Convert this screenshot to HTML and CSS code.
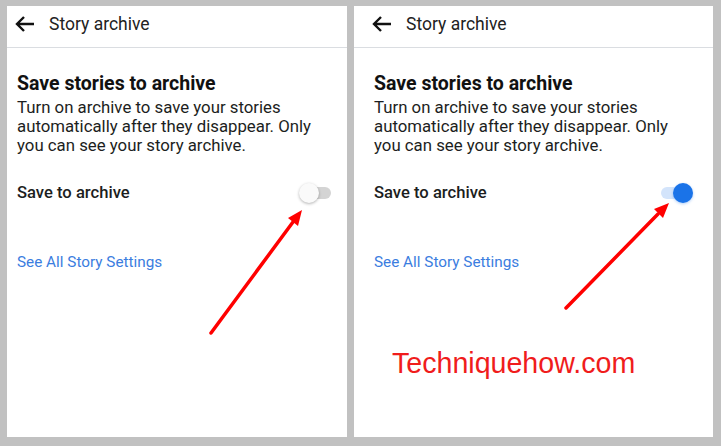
FILE: index.html
```html
<!DOCTYPE html>
<html lang="en">
<head>
  <meta charset="UTF-8">
  <meta name="viewport" content="width=device-width, initial-scale=1.0">
  <title>Story archive</title>
  <link rel="stylesheet" href="styles.css">
</head>
<body>
  <div class="frames">
    <div class="panel panel-left">
      <div class="topbar">
        <svg class="back" width="21" height="18" viewBox="0 0 21 18"><path d="M20 9H3M10 2L3 9l7 7" fill="none" stroke="#111" stroke-width="2.4"/></svg>
        <span class="title">Story archive</span>
      </div>
      <div class="content">
        <h2>Save stories to archive</h2>
        <p class="desc">Turn on archive to save your stories automatically after they disappear. Only you can see your story archive.</p>
        <div class="row">
          <span class="label">Save to archive</span>
          <span class="toggle"><span class="track"></span><span class="thumb"></span></span>
        </div>
        <a class="link" href="#">See All Story Settings</a>
      </div>
    </div>
    <div class="panel panel-right">
      <div class="topbar">
        <svg class="back" width="21" height="18" viewBox="0 0 21 18"><path d="M20 9H3M10 2L3 9l7 7" fill="none" stroke="#111" stroke-width="2.4"/></svg>
        <span class="title">Story archive</span>
      </div>
      <div class="content">
        <h2>Save stories to archive</h2>
        <p class="desc">Turn on archive to save your stories automatically after they disappear. Only you can see your story archive.</p>
        <div class="row">
          <span class="label">Save to archive</span>
          <span class="toggle on"><span class="track"></span><span class="thumb"></span></span>
        </div>
        <a class="link" href="#">See All Story Settings</a>
        <div class="watermark">Techniquehow.com</div>
      </div>
    </div>
  </div>

  <!-- red pointer arrows drawn over the screenshots -->
  <svg class="marks" width="721" height="446" viewBox="0 0 721 446">
    <line x1="211" y1="333" x2="293" y2="222" stroke="#f00" stroke-width="3.5" stroke-linecap="round"/>
    <polygon points="302,210 298,226 288,218" fill="#f00"/>
    <line x1="566" y1="308" x2="658" y2="214" stroke="#f00" stroke-width="3.5" stroke-linecap="round"/>
    <polygon points="669,203 663,218 654,209" fill="#f00"/>
  </svg>
</body>
</html>
```

FILE: styles.css
```css
body {
  margin: 0;
  background: #c1c1c1;
  font-family: Roboto, "Liberation Sans", sans-serif;
  color: #1c1e21;
}
.frames {
  display: flex;
  gap: 7px;
  height: 446px;
  box-sizing: border-box;
  padding: 6px 8px 9px 7px;
}
.panel {
  background: #fff;
}
.panel-left {
  flex: 0 0 340px;
}
.panel-right {
  flex: 1;
}
.topbar {
  height: 42px;
  box-sizing: border-box;
  padding-bottom: 5px;
  border-bottom: 1px solid #dadde1;
  display: flex;
  align-items: center;
}
.panel-left .topbar {
  padding-left: 7px;
}
.panel-right .topbar {
  padding-left: 17px;
}
.back {
  margin-right: 14px;
}
.title {
  font-size: 17.5px;
  color: #222;
}
.content {
  padding-top: 25px;
}
.panel-left .content {
  padding-left: 10px;
  padding-right: 16px;
}
.panel-right .content {
  padding-left: 20px;
  padding-right: 20px;
}
h2 {
  margin: 0;
  font-size: 19.5px;
  line-height: 22px;
  font-weight: 700;
  color: #111;
}
.desc {
  margin: 3px 0 0;
  font-size: 16.8px;
  line-height: 19px;
  color: #1c1e21;
}
.row {
  margin-top: 25px;
  height: 24px;
  display: flex;
  align-items: center;
  justify-content: space-between;
}
.label {
  font-size: 16.6px;
  font-weight: 500;
}
.toggle {
  position: relative;
  width: 32px;
  height: 24px;
}
.track {
  position: absolute;
  left: 6px;
  right: 0;
  top: 7px;
  height: 12px;
  border-radius: 6px;
  background: #d4d4d4;
}
.thumb {
  position: absolute;
  left: 0;
  top: 3px;
  width: 20px;
  height: 20px;
  border-radius: 50%;
  background: #fafafa;
  box-shadow: 0 1px 3px rgba(0, 0, 0, 0.3);
}
.toggle.on .track {
  left: 0;
  right: 4px;
  background: #d3e4fb;
}
.toggle.on .thumb {
  left: auto;
  right: 0;
  background: #1a73e8;
  box-shadow: 0 1px 3px rgba(26, 115, 232, 0.35);
}
.link {
  display: block;
  margin-top: 49px;
  font-size: 15.3px;
  line-height: 18px;
  color: #3b7de0;
  text-decoration: none;
}
.watermark {
  margin-top: 76px;
  margin-left: 18px;
  font-family: "Liberation Sans", Arial, sans-serif;
  font-size: 28.6px;
  line-height: 32px;
  color: #f01c1c;
}
.marks {
  position: absolute;
  left: 0;
  top: 0;
  pointer-events: none;
}
```
